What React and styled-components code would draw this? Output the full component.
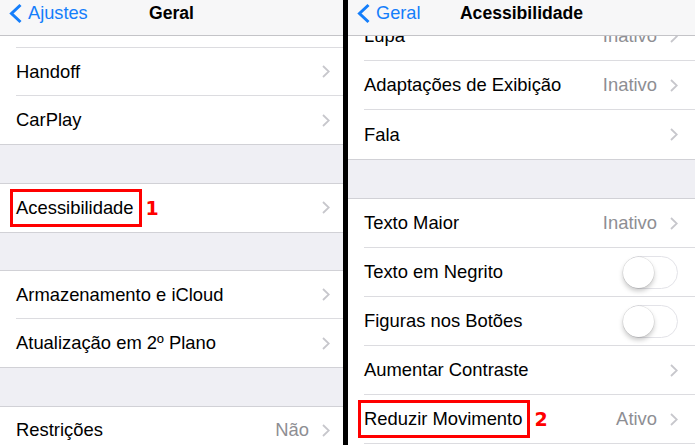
import React from 'react';
import styled, { createGlobalStyle } from 'styled-components';

const GlobalStyle = createGlobalStyle`
  html, body {
    margin: 0;
    padding: 0;
    background: #000;
  }
  body {
    font-family: "Liberation Sans", Arial, sans-serif;
    -webkit-font-smoothing: antialiased;
  }
`;

const Screen = styled.div`
  display: grid;
  grid-template-columns: 343px 347px;
  column-gap: 5px;
  width: 695px;
  height: 445px;
  overflow: hidden;
  background: #000;
`;

const Panel = styled.div`
  display: flex;
  flex-direction: column;
  height: 445px;
  overflow: hidden;
  background: #efeff4;
`;

const NavBar = styled.div`
  flex: none;
  display: grid;
  grid-template-columns: 1fr auto 1fr;
  align-items: start;
  box-sizing: content-box;
  height: 32px;
  padding: 3px 0 0 8px;
  background: #f7f7f8;
  border-bottom: 1px solid #c4c4c8;
  position: relative;
  z-index: 1;
`;

const Back = styled.div`
  display: flex;
  align-items: center;
  gap: 5px;
  color: #147efb;
  font-size: 18.2px;
  line-height: 21px;
`;

const Title = styled.div`
  font-size: 17.6px;
  font-weight: 700;
  line-height: 20px;
  color: #000;
  padding-right: 8px;
`;

const Content = styled.div`
  flex: 1;
  overflow: hidden;
`;

const Scroller = styled.div`
  margin-top: ${p => p.$offset}px;
`;

const Group = styled.div`
  background: #fff;
  border-top: 1px solid #d1d1d6;
  border-bottom: 1px solid #d1d1d6;
  margin-top: ${p => p.$gap}px;
`;

const Row = styled.div`
  display: flex;
  padding-left: 16px;
  height: ${p => p.$h}px;
`;

const RowBody = styled.div`
  flex: 1;
  display: flex;
  align-items: center;
  padding-right: ${p => p.$pr}px;
  border-bottom: ${p => (p.$last ? 'none' : '1px solid #dcdce0')};
  box-sizing: border-box;
`;

const Label = styled.span`
  font-size: 18.4px;
  color: #000;
  line-height: 22px;
`;

const Marked = styled.span`
  display: inline-flex;
  align-items: center;
  height: 38px;
  box-sizing: border-box;
  margin-left: -6px;
  padding: 0 5px 0 3px;
  border: 3px solid #f00;
`;

const Mark = styled.span`
  font-family: "DejaVu Sans", sans-serif;
  font-weight: 700;
  font-size: 19px;
  color: #f00;
  margin-left: 4px;
`;

const Spacer = styled.div`
  flex: 1;
`;

const Detail = styled.span`
  font-size: 18.4px;
  color: #8e8e93;
  margin-right: 13px;
`;

const Track = styled.div`
  width: 55px;
  height: 33px;
  box-sizing: border-box;
  border: 1.5px solid #e3e3e8;
  border-radius: 17px;
  background: #fff;
  display: flex;
  align-items: center;
`;

const Knob = styled.div`
  width: 31px;
  height: 31px;
  border-radius: 50%;
  background: #fff;
  margin-left: -1px;
  box-shadow: 0 3px 5px rgba(0, 0, 0, 0.22), 0 0 0 0.5px rgba(0, 0, 0, 0.12);
`;

function BackChevron() {
  return (
    <svg width="15" height="21" viewBox="0 0 15 21">
      <polyline points="12.5,2 3.5,10.5 12.5,19" fill="none" stroke="#147efb" strokeWidth="3" />
    </svg>
  );
}

function Chevron() {
  return (
    <svg width="8" height="13" viewBox="0 0 8 13">
      <polyline points="1,1 6.8,6.5 1,12" fill="none" stroke="#c7c7cc" strokeWidth="1.8" />
    </svg>
  );
}

function Switch() {
  return (
    <Track>
      <Knob />
    </Track>
  );
}

const leftGroups = [
  [
    { label: 'Busca do Spotlight', chevron: true },
    { label: 'Handoff', chevron: true },
    { label: 'CarPlay', chevron: true },
  ],
  [{ label: 'Acessibilidade', chevron: true, mark: '1' }],
  [
    { label: 'Armazenamento e iCloud', chevron: true },
    { label: 'Atualização em 2º Plano', chevron: true },
  ],
  [
    { label: 'Restrições', detail: 'Não', chevron: true },
    { label: 'Data e Hora', chevron: true },
  ],
];

const rightGroups = [
  [
    { label: 'Lupa', detail: 'Inativo', chevron: true },
    { label: 'Adaptações de Exibição', detail: 'Inativo', chevron: true },
    { label: 'Fala', chevron: true },
  ],
  [
    { label: 'Texto Maior', detail: 'Inativo', chevron: true },
    { label: 'Texto em Negrito', toggle: true },
    { label: 'Figuras nos Botões', toggle: true },
    { label: 'Aumentar Contraste', chevron: true },
    { label: 'Reduzir Movimento', detail: 'Ativo', chevron: true, mark: '2' },
    { label: 'Legendas Ativ./Desat.', chevron: true },
  ],
];

function SettingsRow({ item, last, h, pr }) {
  return (
    <Row $h={h}>
      <RowBody $last={last} $pr={pr}>
        {item.mark ? (
          <>
            <Marked>
              <Label>{item.label}</Label>
            </Marked>
            <Mark>{item.mark}</Mark>
          </>
        ) : (
          <Label>{item.label}</Label>
        )}
        <Spacer />
        {item.detail && <Detail>{item.detail}</Detail>}
        {item.chevron && <Chevron />}
        {item.toggle && <Switch />}
      </RowBody>
    </Row>
  );
}

function SettingsPanel({ back, title, groups, offset, rowH, gap, pr }) {
  return (
    <Panel>
      <NavBar>
        <Back>
          <BackChevron />
          <span>{back}</span>
        </Back>
        <Title>{title}</Title>
        <div />
      </NavBar>
      <Content>
        <Scroller $offset={offset}>
          {groups.map((rows, gi) => (
            <Group key={gi} $gap={gi === 0 ? 0 : gap}>
              {rows.map((item, ri) => (
                <SettingsRow
                  key={item.label}
                  item={item}
                  last={ri === rows.length - 1}
                  h={rowH}
                  pr={pr}
                />
              ))}
            </Group>
          ))}
        </Scroller>
      </Content>
    </Panel>
  );
}

export default function App() {
  return (
    <>
      <GlobalStyle />
      <Screen>
        <SettingsPanel
          back="Ajustes"
          title="Geral"
          groups={leftGroups}
          offset={-37}
          rowH={48}
          gap={37.5}
          pr={13}
        />
        <SettingsPanel
          back="Geral"
          title="Acessibilidade"
          groups={rightGroups}
          offset={-25}
          rowH={49}
          gap={38}
          pr={17}
        />
      </Screen>
    </>
  );
}
